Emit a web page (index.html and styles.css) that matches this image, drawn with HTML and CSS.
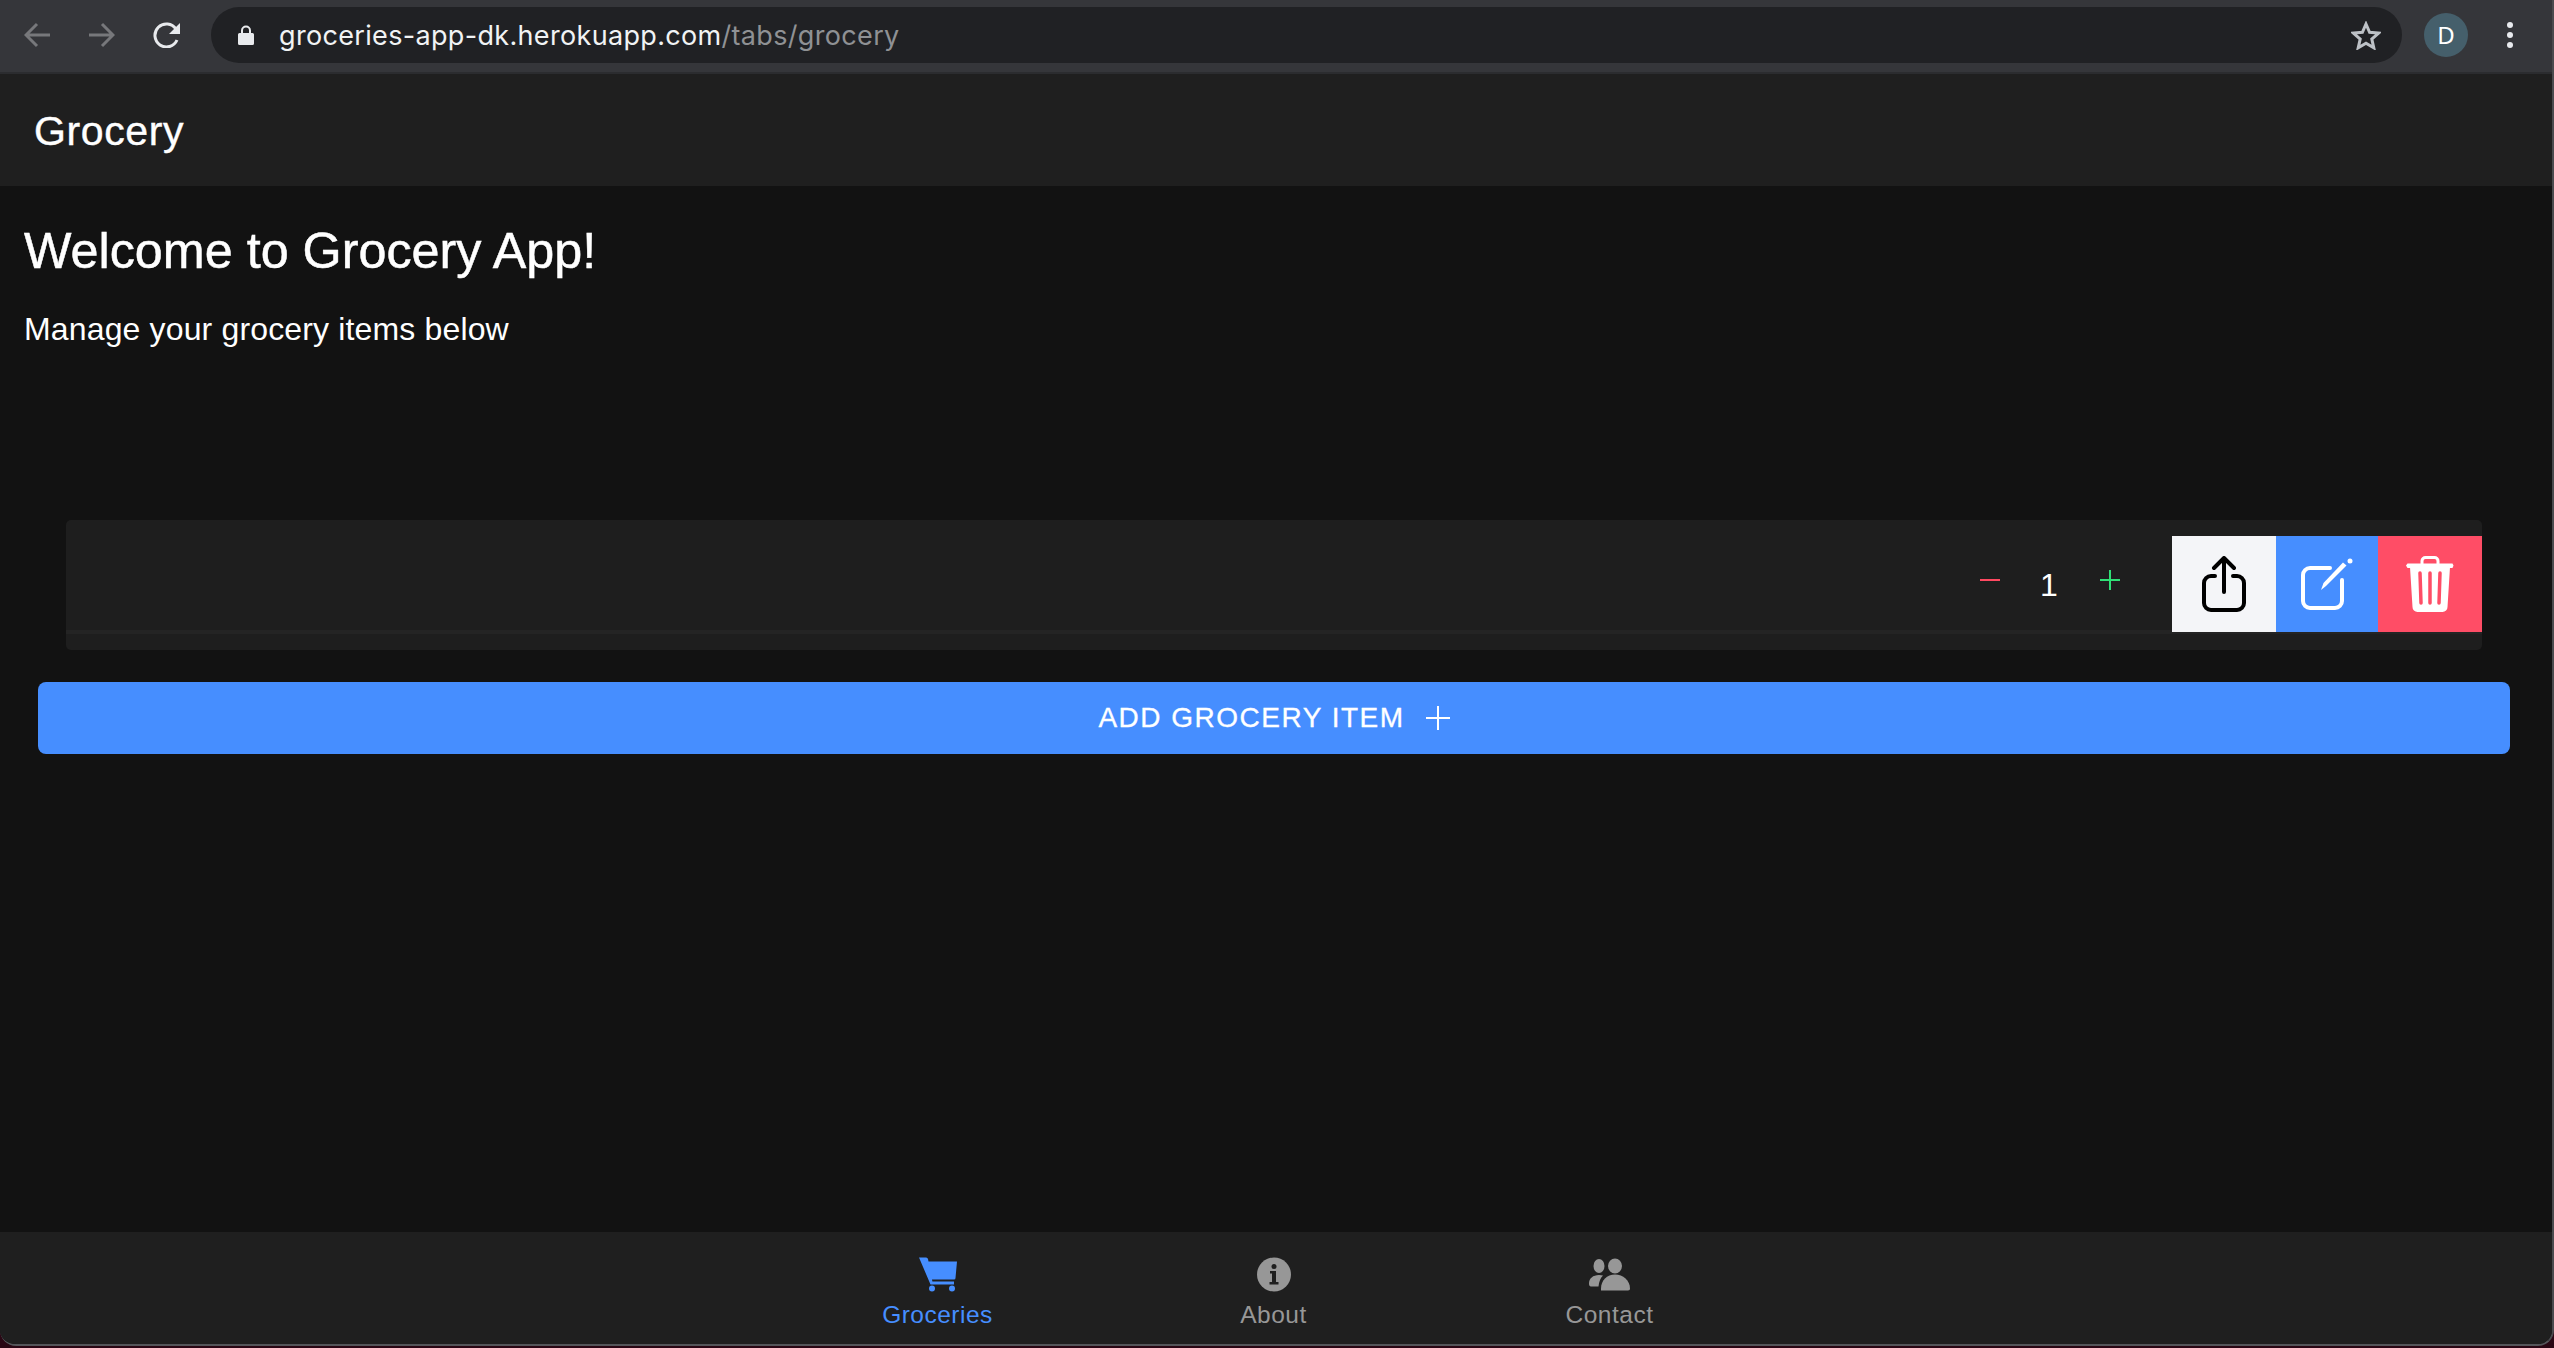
FILE: index.html
```html
<!DOCTYPE html>
<html lang="en">
<head>
    <meta charset="UTF-8">
    <title>Grocery</title>
    <link rel="stylesheet" href="styles.css">
</head>
<body>
    <!-- Browser toolbar -->
    <div class="toolbar">
        <svg class="nav-arrow" viewBox="0 0 27 26"><path d="M26 13H3M13 2L2 13l11 11"/></svg>
        <svg class="nav-arrow forward" viewBox="0 0 27 26"><path d="M1 13h23M14 2l11 11-11 11"/></svg>
        <svg class="reload" viewBox="0 0 29 26"><path class="reload-ring" d="M24 18a11.500 11.500 0 1 1-1-11"/><path class="reload-head" d="M27 1v11H16z"/></svg>
        <div class="address">
            <svg class="lock" viewBox="0 0 16 20"><path d="M3 8V5.500a5 5 0 0 1 10 0V8h1.500A1.500 1.500 0 0 1 16 9.500v9a1.500 1.500 0 0 1-1.500 1.500h-13A1.500 1.500 0 0 1 0 18.500v-9A1.500 1.500 0 0 1 1.500 8zm2 0h6V5.500a3 3 0 0 0-6 0z"/></svg>
            <div class="url">groceries-app-dk.herokuapp.com<span class="url-path">/tabs/grocery</span></div>
            <svg class="star" viewBox="0 0 30 29"><path d="M15 3l3.600 8.300 9 .8-6.800 5.900 2 8.800-7.800-4.600-7.800 4.600 2-8.800-6.800-5.900 9-.8z"/></svg>
        </div>
        <div class="avatar">D</div>
        <div class="dots"><span></span><span></span><span></span></div>
    </div>

    <!-- App header -->
    <header class="app-header">
        <h2 class="app-title">Grocery</h2>
    </header>

    <main class="content">
        <h1 class="welcome">Welcome to Grocery App!</h1>
        <p class="intro">Manage your grocery items below</p>

        <div class="item-card">
            <div class="item-row">
                <div class="qty">
                    <span class="qty-minus"></span>
                    <span class="qty-value">1</span>
                    <span class="qty-plus"></span>
                </div>
                <div class="actions">
                    <div class="action action-share">
                        <svg class="share-icon" viewBox="0 0 44 56"><path d="M13 20H9a7 7 0 0 0-7 7v20a7 7 0 0 0 7 7h26a7 7 0 0 0 7-7V27a7 7 0 0 0-7-7h-4M22 36V3M12 12L22 2l10 10"/></svg>
                    </div>
                    <div class="action action-edit">
                        <svg class="edit-icon" viewBox="0 0 52 52"><path class="edit-box" d="M29 10H9a7 7 0 0 0-7 7v26a7 7 0 0 0 7 7h25a7 7 0 0 0 7-7V22"/><path class="edit-pen" d="M20 32l2.500-7L42 4.500l3.500 3L25 28z"/><circle class="edit-pen" cx="49" cy="3" r="2.500"/></svg>
                    </div>
                    <div class="action action-delete">
                        <svg class="trash-icon" viewBox="0 0 48 56"><path class="trash-handle" d="M16 8V5a3.500 3.500 0 0 1 3.500-3.500h9A3.500 3.500 0 0 1 32 5v3"/><path class="trash-lid" d="M1.500 7.500h45l1 2-1 2.500H1.500l-1.500-2.500z"/><path class="trash-lid" d="M4 11h40l-2.500 40a5 5 0 0 1-5 5h-25a5 5 0 0 1-5-5z"/><path class="trash-slot" d="M14 17l1 30M24 17v30M34 17l-1 30"/></svg>
                    </div>
                </div>
            </div>
        </div>

        <button type="button" class="add-button">ADD GROCERY ITEM<svg class="add-plus" viewBox="0 0 24 24"><path d="M12 0v24M0 12h24"/></svg></button>
    </main>

    <!-- Bottom tabs -->
    <nav class="tabs">
        <div class="tab tab-active">
            <svg class="tab-icon" width="38" height="34" viewBox="0 0 38 34"><path d="M0 0h7a2 2 0 0 1 2 1.500L9.500 4H38l-1.500 16.500a1.500 1.500 0 0 1-1.500 1.500H13l.4 2H35v3H11.500z"/><circle cx="13" cy="31" r="3"/><circle cx="33" cy="31" r="3"/></svg>
            <span>Groceries</span>
        </div>
        <div class="tab">
            <svg class="tab-icon" width="34" height="35" viewBox="0 0 34 35"><circle cx="17" cy="17.500" r="17"/><circle class="cutout" cx="17" cy="9.500" r="2.500"/><path class="cutout" d="M13 14h6v11h2.500v2.500h-9V25H15v-8.500h-2z"/></svg>
            <span>About</span>
        </div>
        <div class="tab">
            <svg class="tab-icon" width="41" height="32" viewBox="0 0 41 32"><ellipse cx="10" cy="7.500" rx="5.500" ry="7"/><ellipse cx="26" cy="7.500" rx="7" ry="7.500"/><path d="M0 25c0-5 4-8.500 10-8.500 1.500 0 3 .2 4 .6-2.500 2.500-4 6-4.500 11H3a3 3 0 0 1-3-3.100z"/><path d="M12 30c0-8 6-14 14-14s15 6 15 14c0 1-.6 2-2 2H12z"/></svg>
            <span>Contact</span>
        </div>
    </nav>
</body>
</html>
```

FILE: styles.css
```css
* {
    box-sizing: border-box;
}
html {
    height: 100%;
    background-color: #2a0714;
}
body {
    height: 1346px;
    margin: 0;
    display: flex;
    flex-direction: column;
    background-color: #121212;
    color: #fff;
    font-family: "Liberation Sans", Arial, sans-serif;
    border-right: 2px solid #4a4b4e;
    border-bottom: 2px solid #55565a;
    border-radius: 0 0 16px 16px;
    overflow: hidden;
}

/* browser toolbar */
.toolbar {
    height: 74px;
    flex: none;
    display: flex;
    align-items: center;
    padding: 0 39px 2px 24px;
    background-color: #35363a;
    border-bottom: 2px solid #2b2c2f;
}
.nav-arrow {
    width: 27px;
    height: 26px;
    fill: none;
    stroke: #77787b;
    stroke-width: 3;
}
.forward {
    margin-left: 37px;
}
.reload {
    width: 29px;
    height: 26px;
    margin-left: 38px;
}
.reload-ring {
    fill: none;
    stroke: #e8eaed;
    stroke-width: 3;
}
.reload-head {
    fill: #e8eaed;
}
.address {
    flex: 1;
    height: 56px;
    margin-left: 29px;
    display: flex;
    align-items: center;
    padding: 0 21px 0 27px;
    background-color: #202124;
    border-radius: 28px;
}
.lock {
    width: 16px;
    height: 20px;
    fill: #e8eaed;
}
.url {
    flex: 1;
    margin-left: 25px;
    font-family: Inter, "Liberation Sans", sans-serif;
    font-size: 27px;
    letter-spacing: 0.33px;
    color: #f1f3f4;
}
.url-path {
    color: #8f9194;
}
.star {
    width: 30px;
    height: 29px;
    fill: none;
    stroke: #bdc1c6;
    stroke-width: 3;
}
.avatar {
    width: 44px;
    height: 44px;
    margin-left: 22px;
    border-radius: 50%;
    background-color: #455f6b;
    text-align: center;
    font-family: "Noto Sans", sans-serif;
    font-size: 24px;
    line-height: 44px;
}
.dots {
    margin-left: 39px;
    display: flex;
    flex-direction: column;
    gap: 4px;
}
.dots span {
    width: 6px;
    height: 6px;
    border-radius: 50%;
    background-color: #e8eaed;
}

/* app header */
.app-header {
    height: 112px;
    flex: none;
    display: flex;
    align-items: center;
    padding: 3px 0 0 34px;
    background-color: #1f1f1f;
}
.app-title {
    margin: 0;
    font-size: 41px;
    font-weight: normal;
    letter-spacing: 0.6px;
    -webkit-text-stroke: 0.4px #fff;
}

/* page body */
.content {
    flex: 1;
    padding: 37px 42px 0 0;
}
.welcome {
    margin: 0 0 30px 24px;
    font-size: 50.3px;
    line-height: 56px;
    font-weight: normal;
    -webkit-text-stroke: 0.5px #fff;
}
.intro {
    margin: 0 0 171px 24px;
    font-size: 32px;
    line-height: 40px;
    letter-spacing: 0.15px;
}
.item-card {
    height: 130px;
    margin: 0 28px 32px 66px;
    padding-top: 16px;
    background-color: #1e1e1e;
    border-radius: 5px;
}
.item-row {
    height: 98px;
    display: flex;
    justify-content: flex-end;
    border-bottom: 4px solid #242424;
}
.qty {
    display: flex;
    align-items: center;
    margin-right: 52px;
}
.qty-minus {
    width: 20px;
    height: 2px;
    margin-bottom: 6px;
    background-color: #ff4961;
}
.qty-value {
    width: 34px;
    margin: 4px 34px 0 32px;
    text-align: center;
    font-size: 32px;
}
.qty-plus {
    width: 20px;
    height: 20px;
    margin-bottom: 6px;
    background:
        linear-gradient(#2fdf75, #2fdf75) center / 100% 2px no-repeat,
        linear-gradient(#2fdf75, #2fdf75) center / 2px 100% no-repeat;
}
.actions {
    display: flex;
    height: 96px;
}
.action {
    display: flex;
    align-items: center;
    justify-content: center;
}
.action-share {
    width: 104px;
    background-color: #f4f5f8;
}
.action-edit {
    width: 102px;
    background-color: #468eff;
}
.action-delete {
    width: 104px;
    background-color: #ff4d66;
}
.share-icon {
    width: 44px;
    height: 56px;
    fill: none;
    stroke: #000;
    stroke-width: 4;
    stroke-linecap: round;
    stroke-linejoin: round;
}
.edit-icon {
    width: 52px;
    height: 52px;
}
.edit-box {
    fill: none;
    stroke: #fff;
    stroke-width: 4;
    stroke-linecap: round;
}
.edit-pen {
    fill: #fff;
}
.trash-icon {
    width: 48px;
    height: 56px;
}
.trash-handle {
    fill: none;
    stroke: #fff;
    stroke-width: 3;
}
.trash-lid {
    fill: #fff;
}
.trash-slot {
    fill: none;
    stroke: #ff4d66;
    stroke-width: 3.500;
    stroke-linecap: round;
}
.add-button {
    width: 2472px;
    height: 72px;
    margin-left: 38px;
    display: flex;
    align-items: center;
    justify-content: center;
    gap: 21px;
    background-color: #468eff;
    color: #fff;
    border: none;
    border-radius: 8px;
    font-family: "Liberation Sans", Arial, sans-serif;
    font-size: 28px;
    letter-spacing: 1.5px;
    -webkit-text-stroke: 0.3px #fff;
}
.add-plus {
    width: 24px;
    height: 26px;
    fill: none;
    stroke: #fff;
    stroke-width: 2;
}

/* bottom tabs */
.tabs {
    height: 112px;
    flex: none;
    display: flex;
    justify-content: center;
    padding-right: 5px;
    background-color: #1f1f1f;
}
.tab {
    width: 336px;
    display: flex;
    flex-direction: column;
    align-items: center;
    color: #979797;
    font-size: 24.5px;
    letter-spacing: 0.5px;
    fill: #979797;
}
.tab-icon {
    height: 35px;
    margin: 25px 0 9px;
}
.tab-active {
    color: #468eff;
    fill: #468eff;
}
.cutout {
    fill: #1f1f1f;
}
```
